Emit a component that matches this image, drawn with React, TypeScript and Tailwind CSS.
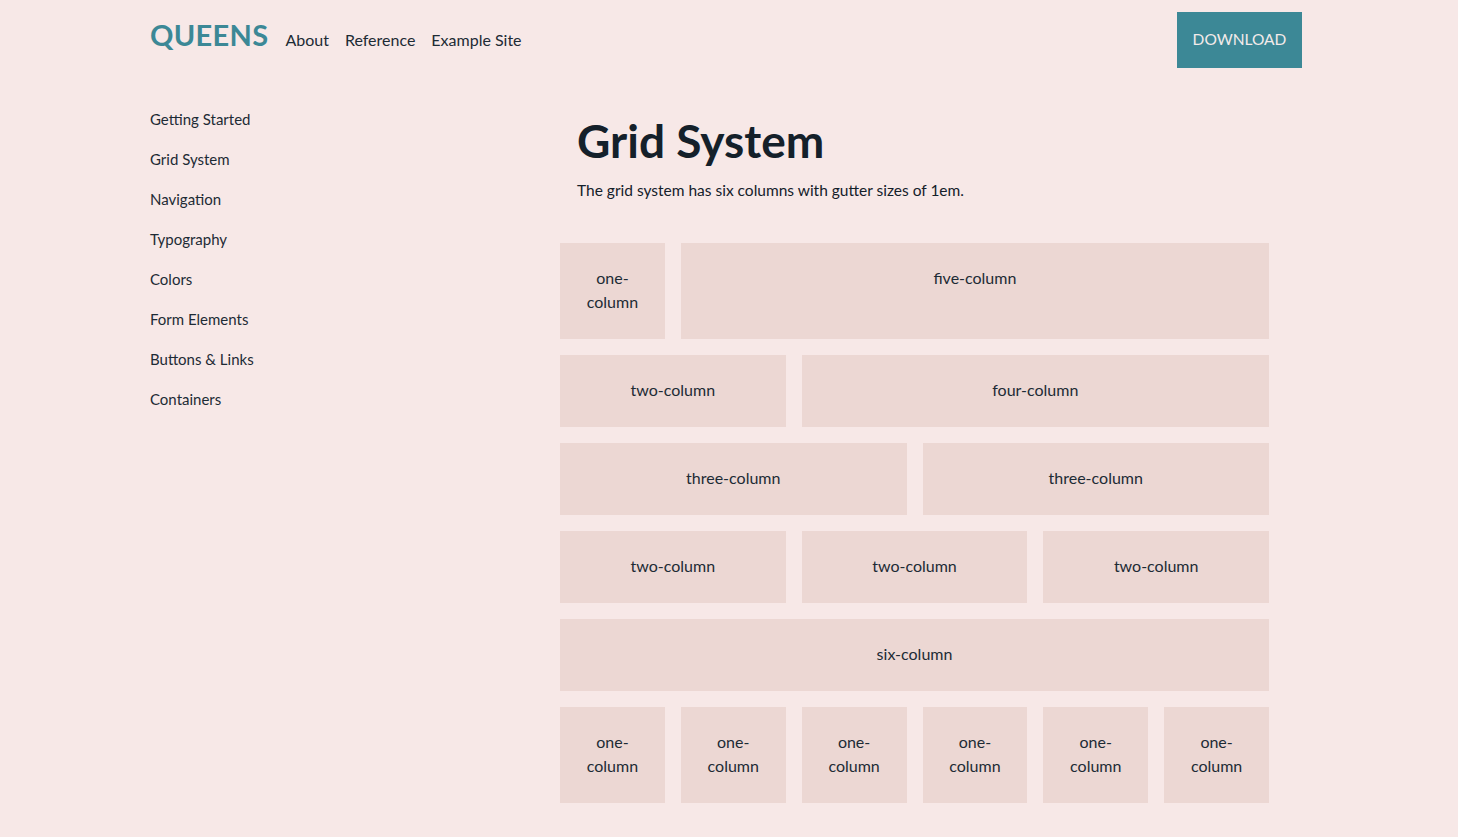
import React from "react";

const side = [
  "Getting Started",
  "Grid System",
  "Navigation",
  "Typography",
  "Colors",
  "Form Elements",
  "Buttons & Links",
  "Containers",
];

function Cell({ span, label }: { span: string; label: string }) {
  return (
    <div className={`${span} bg-[#ecd7d3] px-4 pt-[23px] pb-[25px] text-center leading-6 text-[16px] text-[#1d2b35]`}>
      {label}
    </div>
  );
}

export default function App() {
  return (
    <div
      className="min-h-[837px] w-full bg-[#f7e8e7] text-[#1d2b35]"
      style={{ fontFamily: "Lato, 'Open Sans', sans-serif" }}
    >
      <div className="ml-[150px] w-[1152px]">
        <header className="flex h-[80px] items-start justify-between pt-[12px]">
          <div className="flex items-start">
            <span className="mt-[8px] text-[29px] font-bold tracking-[0.3px] text-[#3c8896] leading-none">QUEENS</span>
            <nav className="ml-[17px] mt-[16px] flex gap-4 text-[16px] leading-6 text-[#1d2b35]">
              <a>About</a>
              <a>Reference</a>
              <a>Example Site</a>
            </nav>
          </div>
          <button className="flex h-[56px] w-[125px] items-center justify-center bg-[#3c8896] pb-[1px] text-[15.5px] text-[#f3ebea]">
            DOWNLOAD
          </button>
        </header>
        <div className="flex">
          <aside className="w-[410px] shrink-0 pt-[19px]">
            {side.map((s) => (
              <div key={s} className="flex h-10 items-center text-[15px] text-[#1d2b35]">
                {s}
              </div>
            ))}
          </aside>
          <main className="w-[709px]">
            <h1 className="mt-[33px] pl-[17px] text-[46px] font-bold leading-[55px] text-[#14202a]">
              Grid System
            </h1>
            <p className="mt-[10px] pl-[17px] text-[15.5px] leading-6 text-[#14202a]">
              The grid system has six columns with gutter sizes of 1em.
            </p>
            <div className="mt-[41px] grid grid-cols-6 gap-4">
              <Cell span="col-span-1" label="one-column" />
              <Cell span="col-span-5" label="five-column" />
              <Cell span="col-span-2" label="two-column" />
              <Cell span="col-span-4" label="four-column" />
              <Cell span="col-span-3" label="three-column" />
              <Cell span="col-span-3" label="three-column" />
              <Cell span="col-span-2" label="two-column" />
              <Cell span="col-span-2" label="two-column" />
              <Cell span="col-span-2" label="two-column" />
              <Cell span="col-span-6" label="six-column" />
              <Cell span="col-span-1" label="one-column" />
              <Cell span="col-span-1" label="one-column" />
              <Cell span="col-span-1" label="one-column" />
              <Cell span="col-span-1" label="one-column" />
              <Cell span="col-span-1" label="one-column" />
              <Cell span="col-span-1" label="one-column" />
            </div>
          </main>
        </div>
      </div>
    </div>
  );
}
